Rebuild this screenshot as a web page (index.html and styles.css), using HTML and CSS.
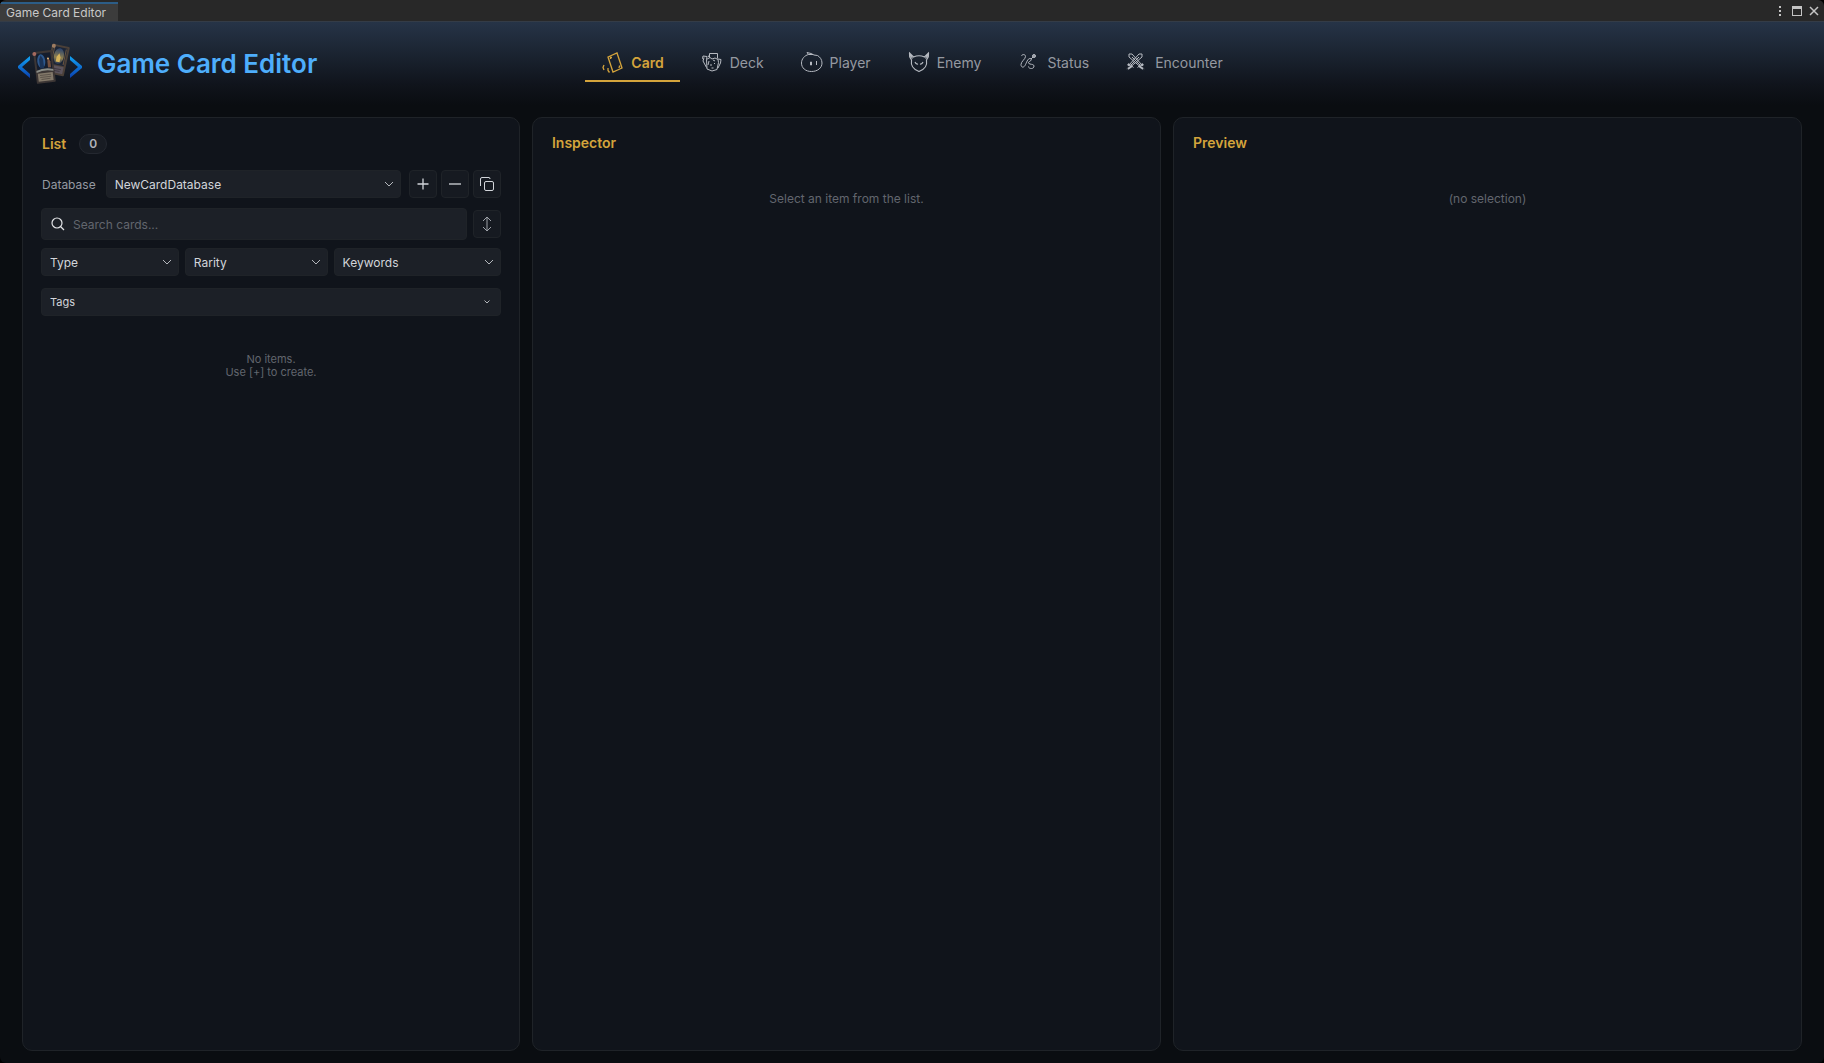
FILE: index.html
```html
<!DOCTYPE html>
<html lang="en">
<head>
    <meta charset="UTF-8">
    <meta name="viewport" content="width=device-width, initial-scale=1.0">
    <title>Game Card Editor</title>
    <link rel="stylesheet" href="styles.css">
</head>
<body>
  <div class="window">
    <div class="titlebar">
        <div class="window-tab">Game Card Editor</div>
        <div class="window-controls">
            <button type="button" aria-label="Menu">
                <svg width="12" height="12" viewBox="0 0 12 12"><path d="M5 1h2v2H5zM5 5h2v2H5zM5 9h2v2H5z"/></svg>
            </button>
            <button type="button" aria-label="Maximize">
                <svg width="12" height="12" viewBox="0 0 12 12"><path d="M1 1h10v10H1zM2 4v6h8V4z" fill-rule="evenodd"/></svg>
            </button>
            <button type="button" aria-label="Close">
                <svg width="12" height="12" viewBox="0 0 12 12"><path d="M2 2l8 8M10 2l-8 8" stroke="currentColor" stroke-width="1.500"/></svg>
            </button>
        </div>
    </div>

    <header class="header">
        <div class="brand">
            <svg class="logo" width="64" height="44" viewBox="0 0 64 44">
                <defs>
                    <linearGradient id="bracket" x1="0" y1="0" x2="0" y2="1">
                        <stop offset="0" stop-color="#12a4f4"/>
                        <stop offset="1" stop-color="#0a3fae"/>
                    </linearGradient>
                    <linearGradient id="glow" x1="0" y1="0" x2="0" y2="1">
                        <stop offset="0" stop-color="#27406c"/>
                        <stop offset=".6" stop-color="#8f8050"/>
                        <stop offset="1" stop-color="#243552"/>
                    </linearGradient>
                </defs>
                <path d="M12 14v4L4 25l8 7v4L0 26v-2z" fill="url(#bracket)"/>
                <path d="M52 14v4l8 7-8 7v4l12-10v-2z" fill="url(#bracket)"/>
                <g transform="rotate(12 40 18)">
                    <rect x="31" y="3" width="18" height="30" rx="1" fill="#4b4038"/>
                    <rect x="33" y="5" width="14" height="18" fill="#1c2536"/>
                    <ellipse cx="40" cy="14" rx="5" ry="8" fill="url(#glow)"/>
                    <path d="M38 20v-5l2-4 2 4v5z" fill="#d5b35a"/>
                    <path d="M34 6v16M46 6v16" stroke="#6a5640"/>
                    <path d="M33 24h14v7H33z" fill="#5c545d"/>
                    <circle cx="33" cy="5" r="2" fill="#9d7c62"/>
                    <path d="M35 27h10M36 29h8" stroke="#403a43"/>
                </g>
                <g transform="rotate(-7 26 25)">
                    <rect x="17" y="9" width="19" height="32" rx="1" fill="#3c3635"/>
                    <rect x="19" y="11" width="15" height="17" fill="#151d2d"/>
                    <ellipse cx="24" cy="19" rx="4" ry="7" fill="#2d588d"/>
                    <path d="M22 26v-9l2-4 2 4v9z" fill="#1b3356"/>
                    <path d="M30 26v-6l1-4 2 4v6z" fill="#75513f"/>
                    <circle cx="31" cy="17" r="1" fill="#e5b87b"/>
                    <path d="M18 28q8-3 17 0v2q-9-3-17 0z" fill="#8a8d87"/>
                    <path d="M19 31h15v8H19z" fill="#83796a"/>
                    <path d="M21 33h11M21 35h11M22 37h9" stroke="#5e554c"/>
                    <circle cx="18" cy="11" r="2" fill="#a4695e"/>
                </g>
            </svg>
            <h1>Game Card Editor</h1>
        </div>
        <nav class="tabs">
            <a class="tab active" href="#card">
                <svg width="24" height="24" viewBox="0 0 24 24"><path stroke-width="1.300" d="M7 6l9-4 5 15-9 4zM9.500 8V6.500H11M17.500 16.500l1-.5v-1.500M3 14l-1 2.500 1 2.500M7 17v2.500l1.500 2"/></svg>
                Card
            </a>
            <a class="tab" href="#deck">
                <svg width="24" height="24" viewBox="0 0 24 24"><path d="M9.500 6.500V2.500h8v5M9.500 4L8 6M6.500 8.500L10 6.500l2 1.500 3-1 3 1.500.5 3-1.500 7-5 1.500-5-2zM6.500 8.500L7 5.500 3 5l-.5 2.500L4 9M4 6.500L3 10l3.500 6.500M18 8l3 .5-.5 3.500-2.500 5M9 10l-1 4M13 9l2 1M11 13v2M14 12l1 1M11.500 17h2"/></svg>
                Deck
            </a>
            <a class="tab" href="#player">
                <svg width="24" height="24" viewBox="0 0 24 24"><path d="M8.500 3.500C4.500 4.500 1.500 8 1.500 12c0 5 4 8.500 10 8.500S22 17 22 12c0-3.500-2-6-4.500-7.500L14 4l-3-1.500-4-1L8.500 3.500H13M16.500 10v4"/><path d="M10.500 11h1v3h-1z"/></svg>
                Player
            </a>
            <a class="tab" href="#enemy">
                <svg width="24" height="24" viewBox="0 0 24 24"><path stroke-width="1.200" d="M6.500 6L2.500 2c-.5 2.500.5 5 2 7C3.500 15 6 18 12 20.500 18 18 20.500 15 19.500 9c1.500-2 2.500-4.500 2-7l-4 4Q12 3.500 6.500 6zM3 3.500l2.500 4M21 3.500l-2.500 4M8 11q1 2.500 3 2M16 11q-1 2.500-3 2"/></svg>
                Enemy
            </a>
            <a class="tab" href="#status">
                <svg width="24" height="24" viewBox="0 0 24 24"><path d="M4.500 5c.5-2 4-2 4 .5S4 10.500 4 13.500s2.500 3.500 4 1S10.500 7.500 13 7.500s1 2.500-.5 3-1.500 2 .5 2.500 4 .5 4 2-1 2.500-2.500 2.500-3-.5-3-2M14 8l2-2"/><circle cx="17" cy="5" r="1.500" fill="currentColor"/></svg>
                Status
            </a>
            <a class="tab" href="#encounter">
                <svg width="24" height="24" viewBox="0 0 24 24"><path d="M4 3h3l10 11-2 1.500L4 6zM7 6l8 8M17 3h-3L4 14l2 1.500L17 6zM14 6l-8 8M12.500 16.500l5-4M8.500 16.500l-5-4"/><path stroke-width="2" stroke-dasharray="2 1" d="M14 15l5 3.500M18 13l-3 5M7 15l-5 3.500M3 13l3 5"/></svg>
                Encounter
            </a>
        </nav>
    </header>

    <main class="columns">
        <section class="panel">
            <div class="list-head">
                <h2>List</h2>
                <span class="count">0</span>
            </div>
            <div class="row database-row">
                <label for="database">Database</label>
                <div class="dropdown">
                    <select id="database"><option>NewCardDatabase</option></select>
                    <svg width="10" height="6" viewBox="0 0 10 6"><path d="M1 1l4 4 4-4"/></svg>
                </div>
                <div class="actions">
                    <button class="icon-btn" type="button" aria-label="Add">
                        <svg width="16" height="16" viewBox="0 0 16 16"><path d="M8 2.500v11M2.500 8h11" stroke-width="1.300"/></svg>
                    </button>
                    <button class="icon-btn" type="button" aria-label="Remove">
                        <svg width="16" height="16" viewBox="0 0 16 16"><path d="M2 8h12" stroke-width="1.300"/></svg>
                    </button>
                    <button class="icon-btn" type="button" aria-label="Duplicate">
                        <svg width="16" height="16" viewBox="0 0 16 16"><path d="M1.500 10V3q0-1.500 1.500-1.500h7q1 0 1 1.500"/><rect x="5.500" y="5.500" width="9" height="9" rx="1.500"/></svg>
                    </button>
                </div>
            </div>
            <div class="row search-row">
                <div class="search">
                    <svg width="14" height="14" viewBox="0 0 14 14"><circle cx="6" cy="6" r="5"/><path d="M9.500 9.500L13 13"/></svg>
                    <input type="text" aria-label="Search cards" placeholder="Search cards...">
                </div>
                <button class="icon-btn" type="button" aria-label="Sort">
                    <svg class="sort" width="16" height="16" viewBox="0 0 16 16"><path d="M8 1.500v13M4 5l4-4 4 4M4 11l4 4 4-4"/></svg>
                </button>
            </div>
            <div class="filters">
                <div class="dropdown">
                    <select aria-label="Type"><option>Type</option></select>
                    <svg width="10" height="6" viewBox="0 0 10 6"><path d="M1 1l4 4 4-4"/></svg>
                </div>
                <div class="dropdown">
                    <select aria-label="Rarity"><option>Rarity</option></select>
                    <svg width="10" height="6" viewBox="0 0 10 6"><path d="M1 1l4 4 4-4"/></svg>
                </div>
                <div class="dropdown">
                    <select aria-label="Keywords"><option>Keywords</option></select>
                    <svg width="10" height="6" viewBox="0 0 10 6"><path d="M1 1l4 4 4-4"/></svg>
                </div>
            </div>
            <div class="dropdown tags">
                <select aria-label="Tags"><option>Tags</option></select>
                <svg width="8" height="6" viewBox="0 0 8 6"><path d="M1.500 1.500L4 4l2.500-2.500"/></svg>
            </div>
            <p class="empty">No items.<br>Use [+] to create.</p>
        </section>

        <section class="panel">
            <h2>Inspector</h2>
            <p class="hint">Select an item from the list.</p>
        </section>

        <section class="panel">
            <h2>Preview</h2>
            <p class="hint">(no selection)</p>
        </section>
    </main>
  </div>
</body>
</html>
```
FILE: styles.css
```css
:root {
    --bg: #0a0d11;
    --panel: #10141b;
    --border: #1f2328;
    --field: #1c2027;
    --gold: #d4a43c;
    --blue: #4eaefc;
    --text: #d2d5da;
    --muted: #9599a1;
    --dim: #62666e;
}

* {
    box-sizing: border-box;
}

body {
    margin: 0;
    background: #000;
    color: var(--text);
    font-family: Inter, "Liberation Sans", sans-serif;
    font-size: 12px;
}

h1, h2, p {
    margin: 0;
}

button, select, input {
    font: inherit;
    color: inherit;
}

.window {
    display: flex;
    flex-direction: column;
    min-height: 100vh;
    background: var(--bg);
    border-radius: 6px;
    overflow: hidden;
}

/* Window title bar */
.titlebar {
    display: flex;
    justify-content: space-between;
    height: 22px;
    background: #282828;
    border-bottom: 1px solid #343c47;
}

.window-tab {
    margin-top: 2px;
    padding: 0 12px 0 6px;
    border-top: 2px solid #2c5d87;
    background: #3c3c3c;
    color: #c8c8c8;
    line-height: 18px;
}

.window-controls {
    display: flex;
    align-items: center;
    gap: 5px;
    padding-right: 4px;
    color: #c4c4c4;
}

.window-controls button {
    display: flex;
    padding: 0;
    border: 0;
    background: none;
}

.window-controls svg {
    fill: currentColor;
}

/* Header */
.header {
    display: grid;
    grid-template-columns: 1fr auto 1fr;
    align-items: center;
    height: 83px;
    padding: 0 18px;
    background: linear-gradient(#263447, #10141c 75%, #0a0d11);
}

.brand {
    display: flex;
    align-items: center;
    gap: 15px;
}

.brand h1 {
    color: var(--blue);
    font-size: 26px;
    font-weight: 600;
    line-height: 32px;
    white-space: nowrap;
}

.tabs {
    display: flex;
    gap: 4px;
}

.tab {
    display: flex;
    align-items: center;
    gap: 6px;
    height: 36px;
    padding: 0 16px;
    border-bottom: 2px solid transparent;
    color: var(--muted);
    font-size: 14px;
    text-decoration: none;
}

.tab svg {
    fill: none;
    stroke: #b6bac1;
}

.tab.active {
    border-color: var(--gold);
    color: var(--gold);
    font-weight: 600;
}

.tab.active svg {
    stroke: var(--gold);
}

/* Panels */
.columns {
    flex: 1;
    display: grid;
    grid-template-columns: 19fr 24fr 24fr;
    gap: 12px;
    padding: 12px 22px;
}

.panel {
    padding: 16px 18px;
    background: var(--panel);
    border: 1px solid var(--border);
    border-radius: 10px;
}

.panel h2 {
    padding-left: 1px;
    color: var(--gold);
    font-size: 14px;
    font-weight: 600;
    line-height: 18px;
}

.list-head {
    display: flex;
    align-items: center;
    gap: 13px;
}

.count {
    padding: 0 9px;
    border: 1px solid #242830;
    border-radius: 10px;
    background: #181c23;
    color: #b0b3b9;
    font-weight: 600;
    line-height: 18px;
}

.row {
    display: flex;
    align-items: center;
}

.database-row {
    gap: 8px;
    margin-top: 16px;
}

.database-row label {
    padding: 0 2px 0 1px;
    color: var(--muted);
}

.dropdown {
    position: relative;
    flex: 1;
}

.dropdown select {
    appearance: none;
    display: block;
    width: 100%;
    height: 28px;
    padding: 0 24px 0 8px;
    border: 1px solid var(--border);
    border-radius: 4px;
    background: var(--field);
}

.dropdown svg {
    position: absolute;
    top: 11px;
    right: 7px;
    fill: none;
    stroke: #b4b7bc;
    pointer-events: none;
}

.tags select {
    font-size: 11px;
}

.tags svg {
    right: 10px;
}

.actions {
    display: flex;
    gap: 4px;
}

.icon-btn {
    display: flex;
    align-items: center;
    justify-content: center;
    width: 28px;
    height: 28px;
    padding: 0;
    border: 1px solid var(--border);
    border-radius: 4px;
    background: #161a21;
}

.icon-btn svg {
    fill: none;
    stroke: currentColor;
}

.icon-btn .sort {
    stroke: #9ea2a9;
}

.search-row {
    gap: 6px;
    margin-top: 10px;
}

.search {
    flex: 1;
    display: flex;
    align-items: center;
    gap: 8px;
    height: 32px;
    padding: 0 9px;
    border: 1px solid var(--border);
    border-radius: 4px;
    background: var(--field);
}

.search svg {
    fill: none;
    stroke: #e2e4e7;
    stroke-width: 1.2;
}

.search input {
    flex: 1;
    min-width: 0;
    padding: 0;
    border: 0;
    outline: 0;
    background: none;
}

.search input::placeholder {
    color: var(--dim);
}

.filters {
    display: grid;
    grid-template-columns: 28fr 29fr 34fr;
    gap: 6px;
    margin: 8px 0 12px;
}

.empty,
.hint {
    color: var(--dim);
    text-align: center;
}

.empty {
    margin-top: 37px;
    font-size: 11px;
    line-height: 13px;
}

.hint {
    margin-top: 39px;
    line-height: 16px;
}
```
